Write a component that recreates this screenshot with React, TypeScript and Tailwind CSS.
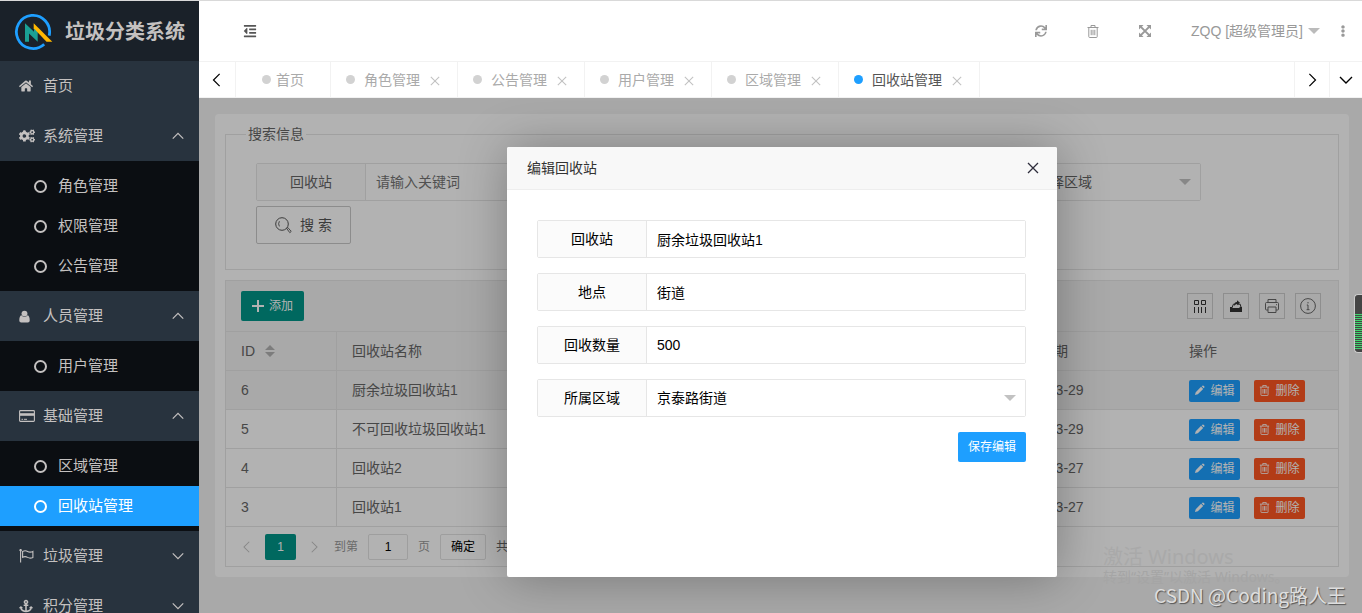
import type { ReactNode } from 'react';
import clsx from 'clsx';
import { FaAnchor, FaCogs, FaEllipsisV, FaHome, FaOutdent, FaSync } from 'react-icons/fa';

/* ---------- icons ---------- */

interface ChevronProps {
  dir: 'up' | 'down' | 'left' | 'right';
  className?: string;
}

const chevronPaths = {
  up: 'M2 11 8 5l6 6',
  down: 'M2 5l6 6 6-6',
  left: 'M11 1 4 8l7 7',
  right: 'M5 1l7 7-7 7',
};

function Chevron({ dir, className }: ChevronProps) {
  return (
    <svg viewBox="0 0 16 16" className={className} fill="none" stroke="currentColor" strokeWidth="1.4">
      <path d={chevronPaths[dir]} />
    </svg>
  );
}

function Cross({ className }: { className?: string }) {
  return (
    <svg viewBox="0 0 12 12" className={className} fill="none" stroke="currentColor" strokeWidth="1.3">
      <path d="M1 1l10 10M11 1 1 11" />
    </svg>
  );
}

function Caret({ className }: { className?: string }) {
  return (
    <svg viewBox="0 0 12 6" className={className} fill="currentColor">
      <path d="M0 0h12L6 6z" />
    </svg>
  );
}

function Trash({ className }: { className?: string }) {
  return (
    <svg viewBox="0 0 12 13" className={className} fill="none" stroke="currentColor">
      <path d="M.5 2.5h11M4 2.5v-2h4v2M1.8 2.5v9.2q0 .8.8.8h6.8q.8 0 .8-.8V2.5M4.2 4.8v5.4M6 4.8v5.4M7.8 4.8v5.4" />
    </svg>
  );
}

function Pencil({ className }: { className?: string }) {
  return (
    <svg viewBox="0 0 12 12" className={className} fill="currentColor">
      <path d="M1 11l.9-3.2 5.8-5.8 2.3 2.3-5.8 5.8zM8.4 1.4 9.2.7q.6-.5 1.2 0l.9.9q.5.6 0 1.2l-.7.8z" />
    </svg>
  );
}

function Person({ className }: { className?: string }) {
  return (
    <svg viewBox="0 0 12 13" className={className} fill="currentColor">
      <circle cx="6" cy="3.3" r="3.2" />
      <path d="M2.6 5.200Q4 7 6 7t3.400-1.800Q11.700 6 11.700 10.800 11.700 13 9.600 13H2.400Q.3 13 .3 10.800.3 6 2.600 5.200z" />
    </svg>
  );
}

function Expand({ className }: { className?: string }) {
  return (
    <svg viewBox="0 0 13 13" className={className} fill="currentColor">
      <path d="M0 0h5L0 5zM13 0v5L8 0zM0 13V8l5 5zM13 13H8l5-5z" />
      <path d="M2 2l9 9M11 2l-9 9" stroke="currentColor" strokeWidth="2.200" />
    </svg>
  );
}

function Card({ className }: { className?: string }) {
  return (
    <svg viewBox="0 0 16 12" className={className} fill="none" stroke="currentColor">
      <rect x=".6" y=".6" width="14.8" height="10.8" rx=".8" strokeWidth="1.1" />
      <path d="M1 4.500h14" strokeWidth="2.6" />
      <path d="M2.5 9.3h1.6M5 9.3h3" />
    </svg>
  );
}

function Flag({ className }: { className?: string }) {
  return (
    <svg viewBox="0 0 16 14" className={className} fill="none" stroke="currentColor" strokeWidth="1.1">
      <path d="M1.6 1v12.5M3.6 2.4q2.6-1.4 5 0t5.3 0v6q-2.8 1.5-5.3 0t-5 0z" />
      <circle cx="1.6" cy="1.2" r=".7" fill="currentColor" />
    </svg>
  );
}

function Logo() {
  return (
    <svg viewBox="0 0 39 38" className="h-[38px] w-[39px] shrink-0" fill="none">
      <path d="M35.2 22.600A16.6 16.6 0 1 0 30.200 31.200" stroke="#1e9fff" strokeWidth="2.8" />
      <path d="M11 10.300l9 8.500v-4l3.700 3.700v10.200L15 20.500v8.200h-4z" fill="#1aa094" />
      <path d="M19.700 10.300l18.600 18.400h-5.800L19.700 15.300z" fill="#ffb800" />
    </svg>
  );
}

/* ---------- sidebar ---------- */

interface MenuGroup {
  label: string;
  icon: ReactNode;
  open?: boolean;
  children?: string[];
}

const ACTIVE = '回收站管理';

const menu: MenuGroup[] = [
  { label: '首页', icon: <FaHome className="size-[14px]" /> },
  {
    label: '系统管理',
    icon: <FaCogs className="size-4" />,
    open: true,
    children: ['角色管理', '权限管理', '公告管理'],
  },
  {
    label: '人员管理',
    icon: <Person className="h-[13px] w-[11px]" />,
    open: true,
    children: ['用户管理'],
  },
  {
    label: '基础管理',
    icon: <Card className="h-3 w-4" />,
    open: true,
    children: ['区域管理', '回收站管理'],
  },
  { label: '垃圾管理', icon: <Flag className="h-[14px] w-4" />, children: [] },
  { label: '积分管理', icon: <FaAnchor className="size-[14px]" />, children: [] },
];

function Sidebar() {
  return (
    <aside className="w-[199px] shrink-0 overflow-hidden bg-[#28333e] text-[15px] text-[#c4c1c0]">
      <div className="flex h-[60px] items-center gap-3 bg-[#1a2129] pt-0.5 pl-[14px]">
        <Logo />
        <h1 className="text-xl font-bold whitespace-nowrap">垃圾分类系统</h1>
      </div>
      <nav>
        {menu.map((group) => (
          <div key={group.label}>
            <a href="#" className="flex h-[50px] items-center pr-3.5 pl-[19px]">
              <span className="flex w-6 items-center">{group.icon}</span>
              {group.label}
              {group.children && (
                <Chevron dir={group.open ? 'up' : 'down'} className="ml-auto size-[14px]" />
              )}
            </a>
            {group.open && (
              <ul className="bg-[#0b0e12] py-[5px]">
                {group.children?.map((item) => (
                  <li key={item}>
                    <a
                      href="#"
                      className={clsx(
                        'flex h-10 items-center gap-[11px] pl-[34px]',
                        item === ACTIVE && 'bg-[#1e9fff] text-white',
                      )}
                    >
                      <span className="size-[13px] rounded-full border-2 border-current" />
                      {item}
                    </a>
                  </li>
                ))}
              </ul>
            )}
          </div>
        ))}
      </nav>
    </aside>
  );
}

/* ---------- header and tabs ---------- */

function TopBar() {
  return (
    <header className="flex h-[60px] items-center text-sm text-[#999]">
      <button type="button" aria-label="菜单" className="ml-[37px] p-[7px] text-[#555]">
        <FaOutdent className="size-[14px]" />
      </button>
      <div className="ml-auto flex items-center">
        <button type="button" aria-label="刷新" className="flex w-13 justify-center">
          <FaSync className="size-3" />
        </button>
        <button type="button" aria-label="清理" className="flex w-13 justify-center">
          <Trash className="h-[13px] w-3" />
        </button>
        <button type="button" aria-label="全屏" className="flex w-13 justify-center">
          <Expand className="size-3" />
        </button>
        <button type="button" className="flex items-center gap-[5px] pl-5 whitespace-nowrap">
          ZQQ [超级管理员]
          <Caret className="h-1.5 w-3 text-[#bbb]" />
        </button>
        <button type="button" aria-label="更多" className="ml-1 flex w-[38px] justify-center">
          <FaEllipsisV className="size-3" />
        </button>
      </div>
    </header>
  );
}

const tabs = ['角色管理', '公告管理', '用户管理', '区域管理', '回收站管理'];

function TabBar() {
  return (
    <div className="flex h-[37px] border-y border-[#f2f2f2] text-sm text-[#aaa]">
      <button
        type="button"
        aria-label="向左"
        className="flex w-[37px] items-center justify-center border-r border-[#f2f2f2] text-black"
      >
        <Chevron dir="left" className="size-[14px]" />
      </button>
      <a href="#" className="flex items-center gap-[5px] border-r border-[#f2f2f2] px-[26px]">
        <span className="size-[9px] rounded-full bg-[#d2d2d2]" />
        首页
      </a>
      {tabs.map((tab) => {
        const active = tab === ACTIVE;
        return (
          <div key={tab} className="flex items-center border-r border-[#f2f2f2] pr-[17px] pl-[15px]">
            <a href="#" className={clsx('flex items-center gap-[9px]', active && 'text-[#555]')}>
              <span
                className={clsx('size-[9px] rounded-full', active ? 'bg-[#1e9fff]' : 'bg-[#d2d2d2]')}
              />
              {tab}
            </a>
            <button type="button" aria-label={`关闭${tab}`} className="mt-0.5 ml-[10px] text-[#c2c2c2]">
              <Cross className="size-[10px]" />
            </button>
          </div>
        );
      })}
      <button
        type="button"
        aria-label="向右"
        className="ml-auto flex w-[35px] items-center justify-center border-l border-[#f2f2f2] text-black"
      >
        <Chevron dir="right" className="size-[14px]" />
      </button>
      <button
        type="button"
        aria-label="标签操作"
        className="flex w-[33px] items-center justify-center border-l border-[#f2f2f2] text-black"
      >
        <Chevron dir="down" className="size-4" />
      </button>
    </div>
  );
}

/* ---------- search and table ---------- */

interface FieldProps {
  id: string;
  label: string;
  className?: string;
  children: ReactNode;
}

/** Boxed label glued to the left of its control. */
function Field({ id, label, className, children }: FieldProps) {
  return (
    <div className={clsx('flex h-[38px] rounded-xs border border-[#e6e6e6]', className)}>
      <label
        htmlFor={id}
        className="flex w-[109px] shrink-0 items-center justify-center border-r border-[#e6e6e6] bg-[#fbfbfb]"
      >
        {label}
      </label>
      <div className="relative flex min-w-0 flex-1 items-center bg-white">{children}</div>
    </div>
  );
}

const controlClass = 'size-full appearance-none bg-transparent px-[10px] outline-none';

function SearchPanel() {
  return (
    <fieldset className="min-w-0 border border-[#e6e6e6]">
      <legend className="ml-5 px-0.5 leading-5">搜索信息</legend>
      <form className="px-[30px] pt-[19px] pb-[25px]">
        <div className="flex gap-6">
          <Field id="q-station" label="回收站" className="w-[299px]">
            <input
              id="q-station"
              placeholder="请输入关键词"
              className={clsx(controlClass, 'placeholder:text-[#757575]')}
            />
          </Field>
          <Field id="q-place" label="地点" className="w-[299px]">
            <input
              id="q-place"
              placeholder="请输入关键词"
              className={clsx(controlClass, 'placeholder:text-[#757575]')}
            />
          </Field>
          <Field id="q-area" label="所属区域" className="w-[299px]">
            <select id="q-area" className={controlClass}>
              <option>请选择区域</option>
            </select>
            <Caret className="pointer-events-none absolute right-[9px] h-1.5 w-3 text-[#c2c2c2]" />
          </Field>
        </div>
        <button
          type="button"
          className="mt-[5px] flex h-[38px] w-[95px] items-center justify-center gap-2 rounded-xs border border-[#c9c9c9] text-[#555]"
        >
          <svg viewBox="0 0 17 17" className="size-[17px]" fill="none" stroke="currentColor">
            <circle cx="7" cy="7" r="6.3" />
            <path d="M4.4 4.2q-1.6 2.6 0 5.2M11.6 11.4l1.2-.9 3.4 3.9-1.4 1.3z" strokeWidth=".9" />
          </svg>
          搜 索
        </button>
      </form>
    </fieldset>
  );
}

const rows = [
  { id: 6, name: '厨余垃圾回收站1', date: '2023-03-29' },
  { id: 5, name: '不可回收垃圾回收站1', date: '2023-03-29' },
  { id: 4, name: '回收站2', date: '2023-03-27' },
  { id: 3, name: '回收站1', date: '2023-03-27' },
];

const toolClass = 'flex size-[26px] items-center justify-center border border-[#ccc] text-[#333]';
const smallButton =
  'flex h-[22px] w-[51px] items-center justify-center gap-[5px] rounded-xs text-xs text-white';

function TableTools() {
  return (
    <div className="flex gap-[10px]">
      <button type="button" aria-label="筛选列" className={toolClass}>
        <svg viewBox="0 0 14 14" className="size-[14px]" fill="none" stroke="currentColor">
          <path d="M1.5 1.5h4v4h-4zM8.5 1.5h4v4h-4zM1.5 8v6M5.5 8v6M8.5 8v6M12.5 8v6" />
        </svg>
      </button>
      <button type="button" aria-label="导出" className={toolClass}>
        <svg viewBox="0 0 14 14" className="size-[14px]" fill="currentColor">
          <path d="M1 8h2l1 1h6l1-1h2v5H1z" />
          <path d="M3.2 8.2l1.2-3h2M9 5.2h2.2l.8 3" fill="none" stroke="currentColor" />
          <path d="M5 7q0-4 3-4V1.2l3 2.6-3 2.5V5Q6.300 5 5 7z" />
        </svg>
      </button>
      <button type="button" aria-label="打印" className={toolClass}>
        <svg viewBox="0 0 16 16" className="size-4" fill="none" stroke="#666">
          <path d="M4 4.500v-3h8v3M4 12H2.500Q1.500 12 1.500 11V5.500q0-1 1-1h11q1 0 1 1V11q0 1-1 1H12" />
          <path d="M4 9h8v5.500H4zM12 6.700h1" />
        </svg>
      </button>
      <button type="button" aria-label="提示" className={toolClass}>
        <svg viewBox="0 0 16 16" className="size-4" fill="none" stroke="#666">
          <circle cx="8" cy="8" r="7.400" />
          <path d="M8 4v1.400M6.800 7H8v4.700M6.600 11.700h2.900" />
        </svg>
      </button>
    </div>
  );
}

function StationTable() {
  return (
    <section className="mt-[10px] border border-[#e6e6e6]">
      <div className="flex h-[51px] items-center justify-between border-b border-[#e6e6e6] bg-[#f2f2f2] pr-[17px] pl-[15px]">
        <button
          type="button"
          className="flex h-[30px] w-[63px] items-center justify-center gap-[5px] rounded-xs bg-[#009688] text-xs text-white"
        >
          <svg viewBox="0 0 12 12" className="size-3" stroke="currentColor" strokeWidth="2">
            <path d="M6 0v12M0 6h12" />
          </svg>
          添加
        </button>
        <TableTools />
      </div>
      <table className="w-full table-fixed border-separate border-spacing-0 text-left [&_td]:border-b [&_td]:border-[#e6e6e6] [&_td]:px-[15px] [&_th]:border-b [&_th]:border-[#e6e6e6] [&_th]:px-[15px] [&_th]:font-normal">
        <colgroup>
          <col className="w-[111px]" />
          <col />
          <col className="w-[177px]" />
          <col className="w-[164px]" />
        </colgroup>
        <thead>
          <tr className="h-[39px] bg-[#f2f2f2]">
            <th className="border-r">
              <span className="flex items-center gap-[10px]">
                ID
                <svg viewBox="0 0 10 12" className="h-3 w-[10px]" fill="#b2b2b2">
                  <path d="M0 5h10L5 0zM0 7h10l-5 5z" />
                </svg>
              </span>
            </th>
            <th>回收站名称</th>
            <th>回收日期</th>
            <th>操作</th>
          </tr>
        </thead>
        <tbody>
          {rows.map((row, i) => (
            <tr key={row.id} className={clsx('h-[39px]', i === 0 && 'bg-[#f2f2f2]')}>
              <td className="border-r">{row.id}</td>
              <td>{row.name}</td>
              <td>{row.date}</td>
              <td>
                <div className="flex gap-[14px] pt-px">
                  <button type="button" className={clsx(smallButton, 'bg-[#1e9fff]')}>
                    <Pencil className="size-[11px]" />
                    编辑
                  </button>
                  <button type="button" className={clsx(smallButton, 'bg-[#ff5722]')}>
                    <Trash className="size-[11px]" />
                    删除
                  </button>
                </div>
              </td>
            </tr>
          ))}
        </tbody>
      </table>
      <div className="flex h-[39px] items-center pl-[15px] text-xs text-[#999]">
        <button type="button" aria-label="上一页" className="text-[#c2c2c2]">
          <Chevron dir="left" className="size-3" />
        </button>
        <button type="button" className="mx-3 h-[26px] w-[31px] rounded-xs bg-[#009688] text-white">
          1
        </button>
        <button type="button" aria-label="下一页" className="text-[#c2c2c2]">
          <Chevron dir="right" className="size-3" />
        </button>
        <label htmlFor="page" className="ml-[14px]">
          到第
        </label>
        <input
          id="page"
          defaultValue="1"
          className="mx-[10px] h-[26px] w-10 rounded-xs border border-[#e2e2e2] text-center text-black"
        />
        页
        <button
          type="button"
          className="mx-[10px] h-[26px] w-[46px] rounded-xs border border-[#e2e2e2] text-black"
        >
          确定
        </button>
        <span className="text-[#666]">共 4 条</span>
      </div>
    </section>
  );
}

/* ---------- edit dialog ---------- */

function EditDialog() {
  return (
    <div
      role="dialog"
      aria-label="编辑回收站"
      className="h-[430px] w-[550px] rounded-xs bg-white text-black shadow-[1px_1px_50px_rgba(0,0,0,0.3)]"
    >
      <div className="flex h-[43px] items-center justify-between rounded-t-xs border-b border-[#eee] bg-[#f8f8f8] pr-[18px] pl-5 text-[#333]">
        <h2>编辑回收站</h2>
        <button type="button" aria-label="关闭" className="text-[#2e2d3c]">
          <Cross className="size-3" />
        </button>
      </div>
      <form className="flex flex-col gap-[15px] pt-[30px] pr-[31px] pl-[30px]">
        <Field id="station" label="回收站">
          <input id="station" defaultValue="厨余垃圾回收站1" className={controlClass} />
        </Field>
        <Field id="place" label="地点">
          <input id="place" defaultValue="街道" className={controlClass} />
        </Field>
        <Field id="amount" label="回收数量">
          <input id="amount" defaultValue="500" className={controlClass} />
        </Field>
        <Field id="area" label="所属区域">
          <select id="area" className={controlClass}>
            <option>京泰路街道</option>
          </select>
          <Caret className="pointer-events-none absolute right-[9px] h-1.5 w-3 text-[#c2c2c2]" />
        </Field>
        <button
          type="button"
          className="h-[30px] w-[68px] self-end rounded-xs bg-[#1e9fff] text-xs text-white"
        >
          保存编辑
        </button>
      </form>
    </div>
  );
}

export default function App() {
  return (
    <div className="relative flex h-screen overflow-hidden border-t border-[#d9d9d9] bg-white font-['Liberation_Sans','Noto_Sans_CJK_SC',sans-serif] text-sm">
      <Sidebar />
      <div className="flex min-w-0 flex-1 flex-col">
        <TopBar />
        <TabBar />
        <main className="relative flex-1 overflow-hidden bg-[#f2f2f2] py-4 pr-[13px] pl-4 text-[#666]">
          <div className="rounded bg-white p-[10px]">
            <SearchPanel />
            <StationTable />
          </div>
          <div className="absolute inset-0 flex items-start justify-center bg-black/30 pt-[49px] pl-[3px]">
            <EditDialog />
          </div>
          <div className="pointer-events-none absolute right-4 bottom-2 flex flex-col font-['Noto_Sans','Noto_Sans_CJK_SC',sans-serif] whitespace-nowrap">
            <div className="w-[243px] self-end">
              <p className="text-xl leading-6 text-[#a9a9a9]">激活 Windows</p>
              <p className="text-sm leading-4 text-[#a5a5a5]">转到“设置”以激活 Windows。</p>
            </div>
            <p className="self-end font-['Noto_Sans_CJK_SC',sans-serif] text-[19px] leading-5 text-[#dedede] [text-shadow:1px_1px_1px_#555]">
              CSDN @Coding路人王
            </p>
          </div>
        </main>
      </div>
      {/* level meter docked to the window edge */}
      <div className="absolute top-[293px] right-0 flex h-[59px] w-2 flex-col justify-end rounded-l border border-r-0 border-[#ccc] bg-[#444] pb-0.5">
        <div className="h-[36px] bg-[repeating-linear-gradient(to_bottom,#3fd46e_0_1px,#444_1px_2px)]" />
      </div>
    </div>
  );
}
